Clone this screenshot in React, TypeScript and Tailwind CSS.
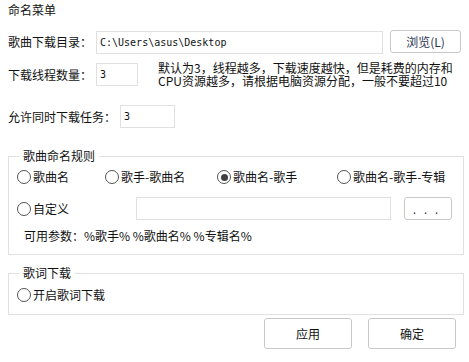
import { useState } from 'react'

const cjk = '[font-family:"Noto_Sans_CJK_SC","Noto_Sans",sans-serif]'

function Radio({ checked, label, onClick }: { checked: boolean; label: string; onClick: () => void }) {
  return (
    <button type="button" onClick={onClick} className="flex h-[16px] items-center gap-[2px] text-left">
      <span className="flex h-[14px] w-[14px] items-center justify-center rounded-full border border-[#555] bg-white">
        {checked && <span className="h-[7px] w-[7px] rounded-full bg-[#404040]" />}
      </span>
      <span className="leading-[16px]">{label}</span>
    </button>
  )
}

function Group({ title, children, className }: { title: string; children: React.ReactNode; className?: string }) {
  return (
    <div className={'relative ml-[8px] w-[456px] border border-[#e0e0e0] ' + (className ?? '')}>
      <span className="absolute left-[10px] top-[-7px] bg-white px-[4px] text-[12px] leading-[12px]">{title}</span>
      {children}
    </div>
  )
}

export default function App() {
  const [rule, setRule] = useState('name-singer')
  const [lyrics, setLyrics] = useState(false)

  const rules = [
    { id: 'name', label: '歌曲名', w: 'w-[88px]' },
    { id: 'singer-name', label: '歌手-歌曲名', w: 'w-[112px]' },
    { id: 'name-singer', label: '歌曲名-歌手', w: 'w-[120px]' },
    { id: 'name-singer-album', label: '歌曲名-歌手-专辑', w: 'w-[120px]' },
  ]

  return (
    <div className={'h-[362px] w-[469px] overflow-hidden bg-white text-[12px] text-[#111] ' + cjk}>
      <div className="pl-[8px] pt-[2px] leading-[16px]">命名菜单</div>

      {/* download dir */}
      <div className="mt-[12px] flex h-[24px] items-center">
        <div className="w-[96px] pl-[8px] leading-[14px]">歌曲下载目录：</div>
        <div className="flex h-[23px] w-[287px] items-center border border-[#e0e0e0] pl-[3px] font-['DejaVu_Sans_Mono',monospace] text-[10px]">
          C:\Users\asus\Desktop
        </div>
        <button
          type="button"
          className="mb-[1px] ml-[7px] h-[23px] w-[71px] rounded-[3px] border border-[#c8c8c8] bg-white text-[12px] leading-[12px] text-[#2a3450]"
        >
          浏览(L)
        </button>
      </div>

      {/* threads */}
      <div className="mt-[9px] flex">
        <div className="flex h-[23px] w-[96px] items-center pl-[8px] leading-[14px]">下载线程数量：</div>
        <div className="flex h-[23px] w-[42px] items-center border border-[#e0e0e0] pl-[3px] font-['DejaVu_Sans_Mono',monospace] text-[10px]">
          3
        </div>
        <div className="ml-[20px] mt-[-2px] text-[12px] leading-[13px]">
          <div className="whitespace-nowrap">默认为3，线程越多，下载速度越快，但是耗费的内存和</div>
          <div className="whitespace-nowrap">CPU资源越多，请根据电脑资源分配，一般不要超过10</div>
        </div>
      </div>

      {/* tasks */}
      <div className="mt-[18px] flex h-[23px] items-center">
        <div className="w-[120px] pl-[8px] leading-[14px]">允许同时下载任务：</div>
        <div className="flex h-[23px] w-[55px] items-center border border-[#e0e0e0] pl-[3px] font-['DejaVu_Sans_Mono',monospace] text-[10px]">
          3
        </div>
      </div>

      <Group title="歌曲命名规则" className="mt-[28px] pb-[12px] pt-[12px]">
        <div className="flex pl-[8px]">
          {rules.map((r) => (
            <div key={r.id} className={r.w}>
              <Radio checked={rule === r.id} label={r.label} onClick={() => setRule(r.id)} />
            </div>
          ))}
        </div>
        <div className="mt-[12px] flex h-[23px] items-center pl-[8px]">
          <div className="w-[119px]">
            <Radio checked={rule === 'custom'} label="自定义" onClick={() => setRule('custom')} />
          </div>
          <div className="h-[23px] w-[255px] border border-[#e0e0e0]" />
          <button
            type="button"
            className="ml-[13px] flex h-[23px] w-[48px] items-end justify-center rounded-[3px] border border-[#c8c8c8] bg-white pb-[3px] font-['DejaVu_Sans_Mono',monospace] text-[10px] leading-[10px] tracking-[5px] text-[#2a3450]"
          >
            ...
          </button>
        </div>
        <div className="mt-[10px] pl-[15px] leading-[12px]">可用参数：%歌手% %歌曲名% %专辑名%</div>
      </Group>

      <Group title="歌词下载" className="mt-[18px] pb-[11px] pt-[13px]">
        <div className="pl-[8px]">
          <Radio checked={lyrics} label="开启歌词下载" onClick={() => setLyrics((v) => !v)} />
        </div>
      </Group>

      <div className="mt-[3px] flex justify-end gap-[16px] pr-[13px]">
        <button type="button" className="h-[31px] w-[88px] rounded-[3px] border border-[#c8c8c8] bg-white text-[12px]">
          应用
        </button>
        <button type="button" className="h-[31px] w-[88px] rounded-[3px] border border-[#c8c8c8] bg-white text-[12px]">
          确定
        </button>
      </div>
    </div>
  )
}
